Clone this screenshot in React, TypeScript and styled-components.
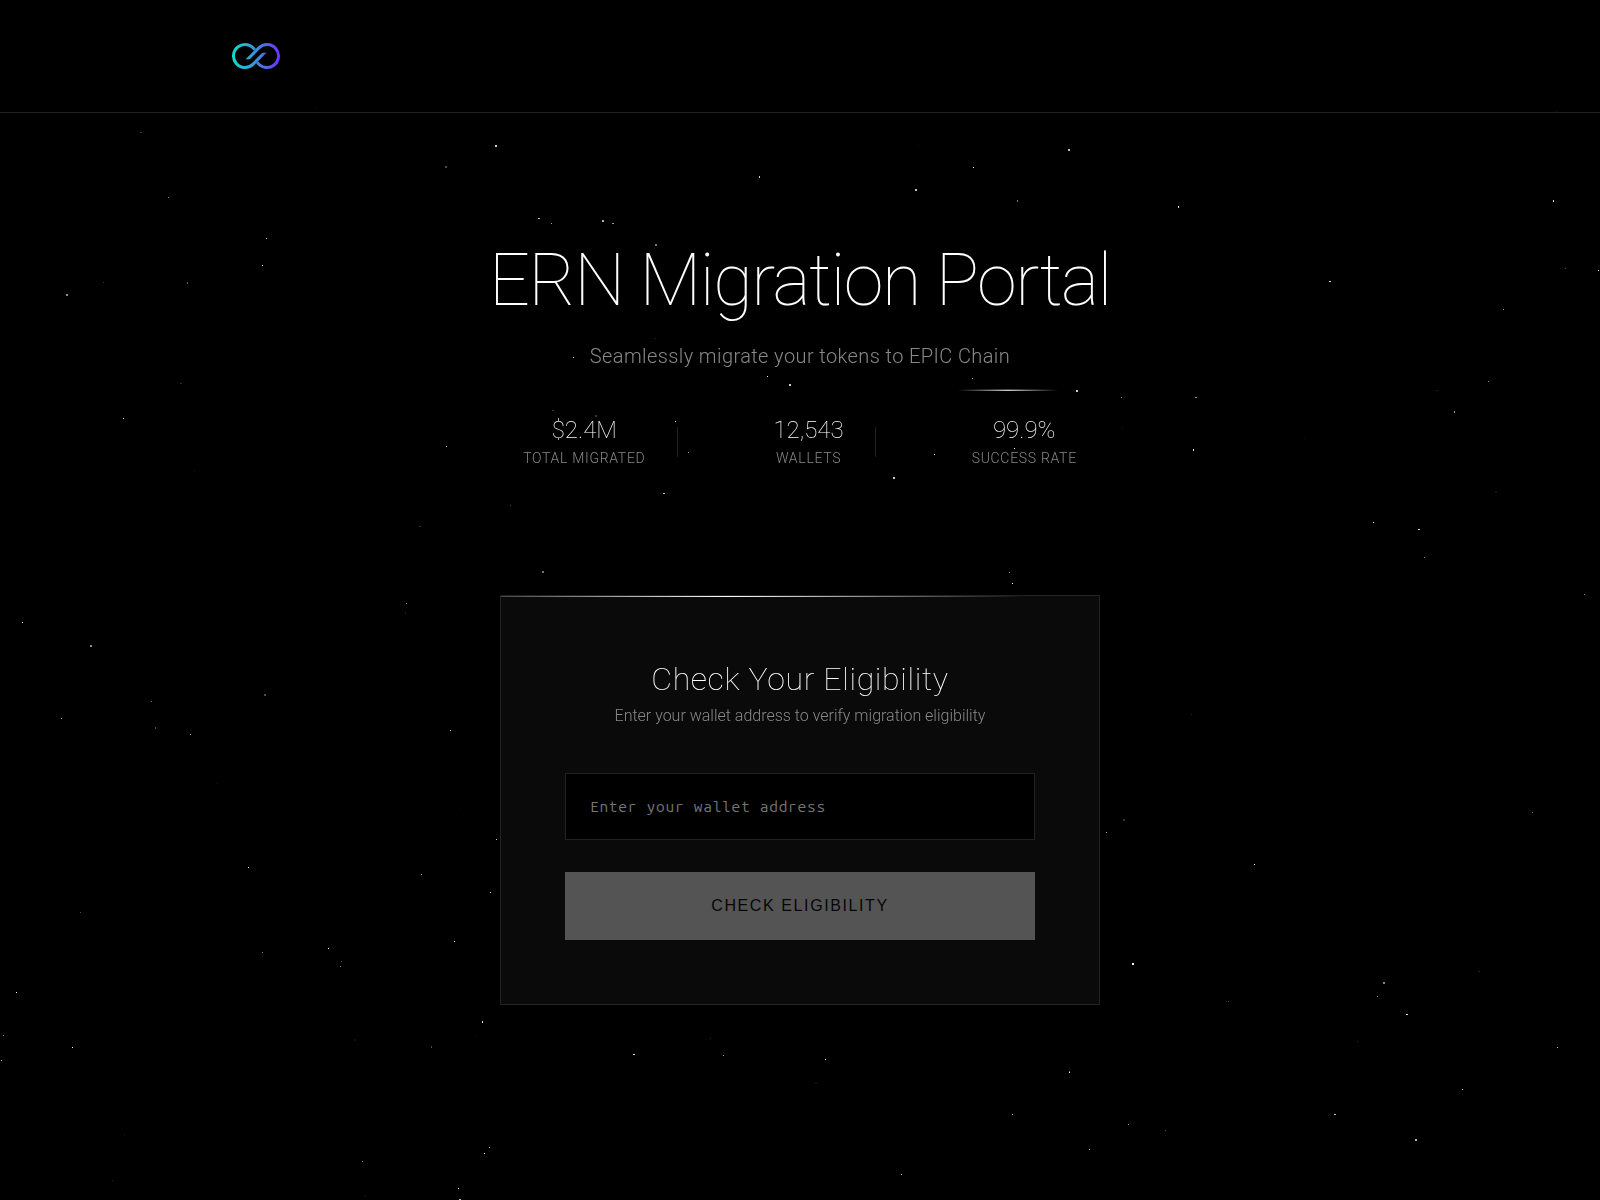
import React, { useState } from "react";
import styled, { createGlobalStyle } from "styled-components";

const GlobalStyle = createGlobalStyle`
  *, *::before, *::after { box-sizing: border-box; margin: 0; padding: 0; }
  body {
    background: #000;
    color: #fff;
    font-family: Roboto, sans-serif;
    font-weight: 300;
  }
`;

const Page = styled.div`
  position: relative;
  min-height: 1200px;
  background: #000;
  overflow: hidden;
`;

const Sky = styled.svg`
  position: absolute;
  inset: 0;
  width: 1600px;
  height: 1200px;
  pointer-events: none;
`;

const Nav = styled.header`
  position: relative;
  padding: 32px 0;
  border-bottom: 1px solid #222;
`;

const NavInner = styled.div`
  max-width: 1200px;
  margin: 0 auto;
  padding: 0 32px;
  display: flex;
  align-items: center;
`;

const LogoMark = styled.svg`
  display: block;
  width: 48px;
  height: 48px;
`;

const Main = styled.main`
  position: relative;
  display: flex;
  flex-direction: column;
  align-items: center;
  gap: 129px;
  padding: 128px 32px;
`;

const Hero = styled.section`
  text-align: center;
  will-change: transform;
`;

const Title = styled.h1`
  font-size: 72px;
  font-weight: 100;
  line-height: 1.1;
  letter-spacing: -0.02em;
  margin-bottom: 24px;
`;

const Subtitle = styled.p`
  font-size: 20px;
  letter-spacing: 0.02em;
  color: #888;
  margin-bottom: 48px;
`;

const Stats = styled.div`
  display: flex;
  justify-content: center;
  gap: 128px;
`;

const Stat = styled.div`
  position: relative;

  &:not(:last-child)::after {
    content: "";
    position: absolute;
    top: 11px;
    right: -32.6px;
    width: 1px;
    height: 30px;
    background: #222;
  }
`;

const StatValue = styled.div`
  font-size: 24px;
  font-weight: 100;
  margin-bottom: 6px;
`;

const StatLabel = styled.div`
  font-size: 14px;
  letter-spacing: 0.05em;
  text-transform: uppercase;
  color: #888;
`;

const Card = styled.section`
  position: relative;
  width: 600px;
  padding: 64px;
  background: #0a0a0a;
  border: 1px solid #222;
  overflow: hidden;

  &::before {
    content: "";
    position: absolute;
    top: 0;
    left: -73px;
    width: 100%;
    height: 1px;
    background: linear-gradient(90deg, transparent, #fff, transparent);
  }
`;

const CardHeader = styled.div`
  text-align: center;
  margin-bottom: 48px;
  will-change: transform;
`;

const CardTitle = styled.h2`
  font-size: 32px;
  font-weight: 100;
  letter-spacing: 0.02em;
  margin-bottom: 8px;
`;

const CardText = styled.p`
  font-size: 16px;
  color: #888;
`;

const Form = styled.form`
  display: flex;
  flex-direction: column;
  gap: 32px;
`;

const AddressInput = styled.input`
  width: 100%;
  height: 67px;
  padding: 23px 24px 25px;
  background: #000;
  border: 1px solid #222;
  color: #fff;
  font-family: "Ubuntu Mono", "Noto Sans Mono", monospace;
  font-size: 15.6px;
  letter-spacing: 0.045em;
  outline: none;

  &::placeholder {
    color: #757575;
  }
`;

const SubmitButton = styled.button`
  width: 100%;
  height: 68px;
  background: #fff;
  border: 1px solid #fff;
  color: #000;
  font-family: "Liberation Sans", Arial, sans-serif;
  font-size: 16px;
  font-weight: 400;
  letter-spacing: 0.1em;
  text-transform: uppercase;

  &:disabled {
    opacity: 0.3;
  }
`;

// x, y, width, height, opacity
const STARS: [number, number, number, number, number][] = [
  [315, 107, 1, 1, 0.07], [140, 132, 2, 1, 0.2], [495, 145, 2, 2, 0.8], [445, 166, 2, 2, 0.3],
  [168, 197, 1, 1, 0.5], [266, 238, 1, 1, 0.75], [262, 265, 1, 1, 1], [103, 282, 1, 1, 0.2],
  [187, 282, 1, 2, 0.35], [66, 294, 2, 2, 0.55], [180, 383, 2, 1, 0.18], [123, 418, 1, 1, 0.9],
  [446, 446, 1, 1, 0.8], [194, 471, 1, 1, 0.06], [419, 526, 2, 1, 0.18], [406, 603, 1, 1, 0.5],
  [405, 612, 1, 2, 0.12], [22, 622, 1, 1, 1],

  [1068, 149, 2, 2, 0.75], [973, 167, 1, 1, 0.95], [917, 145, 2, 1, 0.04], [759, 176, 1, 2, 0.8],
  [915, 189, 2, 2, 0.75], [1017, 200, 1, 2, 0.45], [538, 218, 2, 1, 0.75], [551, 223, 1, 1, 0.6],
  [602, 220, 2, 2, 0.7], [612, 223, 2, 1, 0.6], [655, 244, 2, 2, 0.45], [654, 338, 2, 1, 0.1],
  [582, 302, 1, 1, 1], [573, 357, 1, 1, 0.9], [767, 376, 1, 1, 0.9], [789, 384, 2, 2, 0.8],
  [972, 378, 1, 1, 0.6], [1076, 390, 2, 2, 0.8], [552, 410, 2, 1, 0.2], [595, 415, 2, 2, 0.2],
  [675, 421, 1, 1, 0.9], [688, 452, 1, 1, 0.6], [1014, 448, 1, 1, 1], [934, 454, 1, 1, 1],
  [893, 477, 2, 2, 0.8], [663, 493, 2, 1, 0.75], [701, 483, 1, 1, 0.04], [510, 505, 1, 1, 0.25],
  [542, 571, 2, 2, 0.45], [1009, 572, 1, 1, 0.5], [1012, 583, 1, 1, 1],

  [1178, 206, 1, 2, 0.85], [1553, 200, 1, 2, 0.85], [1329, 281, 2, 1, 0.85], [1565, 268, 1, 1, 0.3],
  [1598, 270, 1, 1, 1], [1503, 309, 1, 1, 0.6], [1488, 381, 1, 1, 0.5], [1436, 390, 2, 1, 0.1],
  [1121, 397, 1, 1, 0.5], [1195, 397, 2, 1, 0.6], [1454, 411, 1, 2, 0.6], [1122, 428, 1, 1, 0.08],
  [1193, 449, 1, 2, 0.9], [1304, 438, 1, 1, 0.06], [1495, 491, 2, 2, 0.08], [1373, 522, 1, 1, 1],
  [1418, 529, 2, 1, 0.85], [1424, 557, 1, 1, 0.5], [1584, 594, 1, 1, 0.5], [1556, 111, 2, 1, 0.04],

  [90, 645, 2, 2, 0.55], [264, 694, 2, 2, 0.3], [151, 701, 1, 1, 0.4], [61, 718, 1, 1, 0.6],
  [155, 727, 1, 2, 0.3], [190, 734, 1, 1, 0.55], [450, 730, 1, 1, 0.8], [496, 839, 1, 1, 0.8],
  [248, 867, 1, 1, 0.95], [421, 874, 1, 1, 0.6], [490, 892, 1, 1, 0.85], [80, 912, 1, 1, 0.3],
  [262, 952, 1, 1, 0.5], [454, 941, 1, 1, 1], [328, 948, 1, 1, 1], [341, 961, 1, 1, 0.3],
  [340, 966, 1, 1, 0.5], [16, 992, 1, 1, 1], [3, 1035, 1, 1, 0.5], [1, 1060, 1, 1, 0.75],
  [72, 1047, 1, 1, 1], [482, 1021, 1, 2, 0.9], [476, 1035, 1, 1, 0.08], [431, 1046, 1, 2, 0.3],
  [354, 1039, 2, 2, 0.05], [124, 1134, 1, 2, 0.06], [489, 1147, 1, 1, 0.75], [484, 1153, 1, 1, 1],
  [362, 1161, 1, 1, 0.5], [112, 1180, 1, 1, 0.15], [458, 1188, 1, 1, 1], [459, 1199, 2, 1, 0.75],
  [365, 1195, 1, 2, 0.07], [216, 783, 2, 1, 0.03], [459, 809, 1, 1, 0.05],

  [1191, 714, 1, 1, 0.15], [1532, 812, 1, 1, 0.4], [1123, 819, 2, 2, 0.2], [1106, 832, 1, 1, 0.65],
  [1254, 864, 1, 1, 0.95], [1132, 963, 2, 2, 0.95], [1478, 971, 2, 1, 0.13], [1383, 982, 2, 2, 0.5],
  [1377, 996, 1, 1, 0.5], [1228, 1001, 1, 1, 0.3], [1406, 1014, 2, 1, 0.9], [1357, 1041, 1, 1, 0.18],
  [1557, 1047, 1, 1, 0.75], [1462, 1089, 1, 1, 0.75], [1334, 1114, 2, 1, 0.75], [1128, 1124, 1, 1, 0.6],
  [1165, 1130, 1, 1, 0.3], [1415, 1139, 2, 2, 0.7],

  [633, 1054, 2, 1, 0.85], [710, 1038, 1, 1, 0.2], [723, 1055, 1, 1, 0.6], [825, 1059, 1, 1, 0.95],
  [815, 1083, 2, 1, 0.13], [1069, 1071, 1, 1, 0.5], [1069, 1072, 1, 1, 1], [1012, 1114, 1, 1, 0.75],
  [1089, 1149, 1, 1, 0.7], [901, 1174, 1, 1, 0.75],
];

function StarField() {
  return (
    <Sky viewBox="0 0 1600 1200" aria-hidden="true">
      <defs>
        <linearGradient id="trail" x1="0" y1="0" x2="1" y2="0">
          <stop offset="0" stopColor="#fff" stopOpacity="0" />
          <stop offset="0.5" stopColor="#fff" />
          <stop offset="1" stopColor="#fff" stopOpacity="0" />
        </linearGradient>
      </defs>
      {STARS.map(([x, y, w, h, o], i) => (
        <rect key={i} x={x} y={y} width={w} height={h} fill="#fff" opacity={o} shapeRendering="crispEdges" />
      ))}
      <rect x="958" y="389" width="100" height="1" fill="url(#trail)" opacity="0.3" />
      <rect x="958" y="390" width="100" height="1" fill="url(#trail)" opacity="0.8" />
    </Sky>
  );
}

function Logo() {
  return (
    <LogoMark viewBox="0 0 48 48" fill="none" stroke="url(#brand)" strokeWidth="3">
      <defs>
        <linearGradient id="brand" gradientUnits="userSpaceOnUse" x1="0" y1="24" x2="48" y2="24">
          <stop offset="0" stopColor="#0be0c2" />
          <stop offset="0.5" stopColor="#3e8fdc" />
          <stop offset="1" stopColor="#6a30ff" />
        </linearGradient>
        <clipPath id="rightLoop">
          <path d="M0 0H48V48H20V27.3H0Z" />
        </clipPath>
        <clipPath id="leftLoop">
          <path d="M0 0H28V20.7H48V48H0Z" />
        </clipPath>
      </defs>
      <path d="M13.2 29.7 L26.87 15.87 A11.5 11.5 0 1 1 25.3 30.2" clipPath="url(#rightLoop)" />
      <path d="M34.8 18.3 L21.13 32.13 A11.5 11.5 0 1 1 22.7 17.8" clipPath="url(#leftLoop)" />
    </LogoMark>
  );
}

const STATS = [
  { value: "$2.4M", label: "Total Migrated" },
  { value: "12,543", label: "Wallets" },
  { value: "99.9%", label: "Success Rate" },
];

export default function App() {
  const [address, setAddress] = useState("");

  return (
    <>
      <GlobalStyle />
      <Page>
        <StarField />
        <Nav>
          <NavInner>
            <Logo />
          </NavInner>
        </Nav>
        <Main>
          <Hero>
            <Title>ERN Migration Portal</Title>
            <Subtitle>Seamlessly migrate your tokens to EPIC Chain</Subtitle>
            <Stats>
              {STATS.map((s) => (
                <Stat key={s.label}>
                  <StatValue>{s.value}</StatValue>
                  <StatLabel>{s.label}</StatLabel>
                </Stat>
              ))}
            </Stats>
          </Hero>
          <Card>
            <CardHeader>
              <CardTitle>Check Your Eligibility</CardTitle>
              <CardText>Enter your wallet address to verify migration eligibility</CardText>
            </CardHeader>
            <Form onSubmit={(e) => e.preventDefault()}>
              <AddressInput
                placeholder="Enter your wallet address"
                value={address}
                onChange={(e) => setAddress(e.target.value)}
              />
              <SubmitButton disabled={!address}>Check Eligibility</SubmitButton>
            </Form>
          </Card>
        </Main>
      </Page>
    </>
  );
}
